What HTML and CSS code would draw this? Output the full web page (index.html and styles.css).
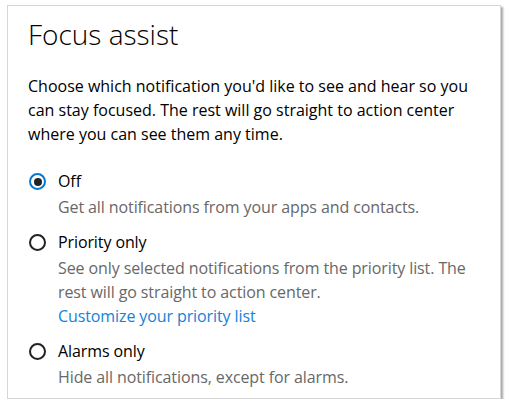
FILE: index.html
```html
<!DOCTYPE html>
<html>
<head>
<meta charset="utf-8">
<link rel="stylesheet" href="styles.css">
</head>
<body>
<div class="card">
  <h1 class="title">Focus assist</h1>
  <p class="intro">Choose which notification you'd like to see and hear so you can stay focused. The rest will go straight to action center where you can see them any time.</p>
  <div class="options">
    <div class="option">
      <span class="radio checked"></span>
      <div class="opt-body">
        <div class="label">Off</div>
        <div class="desc">Get all notifications from your apps and contacts.</div>
      </div>
    </div>
    <div class="option">
      <span class="radio"></span>
      <div class="opt-body">
        <div class="label">Priority only</div>
        <div class="desc">See only selected notifications from the priority list. The rest will go straight to action center.</div>
        <a class="link" href="#">Customize your priority list</a>
      </div>
    </div>
    <div class="option">
      <span class="radio"></span>
      <div class="opt-body">
        <div class="label">Alarms only</div>
        <div class="desc">Hide all notifications, except for alarms.</div>
      </div>
    </div>
  </div>
</div>
</body>
</html>
```
FILE: styles.css
```css
html, body { margin: 0; padding: 0; background: #ffffff; }
body { font-family: "Open Sans", "Noto Sans", sans-serif; color: #000; }
.card {
  margin: 5px 0 0 7px;
  width: 494px;
  height: 394px;
  box-sizing: border-box;
  background: #fff;
  border: 1px solid #d6d6d6;
  box-shadow: 2px 2px 2px rgba(0,0,0,0.35);
  padding: 10px 20px 0 20px;
}
.title {
  margin: 0;
  font-weight: 300;
  font-size: 28px;
  line-height: 36px;
}
.intro {
  margin: 22px 0 0 0;
  font-size: 16px;
  line-height: 24px;
}
.options { display: flex; flex-direction: column; gap: 10px; margin-top: 22px; }
.option { display: flex; gap: 12px; align-items: flex-start; }
.radio {
  flex: none;
  width: 17px; height: 17px;
  box-sizing: border-box;
  border: 2px solid #222;
  border-radius: 50%;
  margin-top: 5px;
  margin-left: 1px;
  position: relative;
}
.radio.checked { border-color: #0078d7; }
.radio.checked::after {
  content: "";
  position: absolute;
  left: 2.5px; top: 2.5px;
  width: 8px; height: 8px;
  border-radius: 50%;
  background: #222;
}
.opt-body { display: flex; flex-direction: column; }
.label { font-size: 16px; line-height: 27px; letter-spacing: -0.1px; }
.desc { font-size: 16px; line-height: 24px; color: #686868; letter-spacing: -0.1px; }
.link { font-size: 16px; line-height: 24px; color: #1482d8; text-decoration: none; letter-spacing: -0.1px; }
```
